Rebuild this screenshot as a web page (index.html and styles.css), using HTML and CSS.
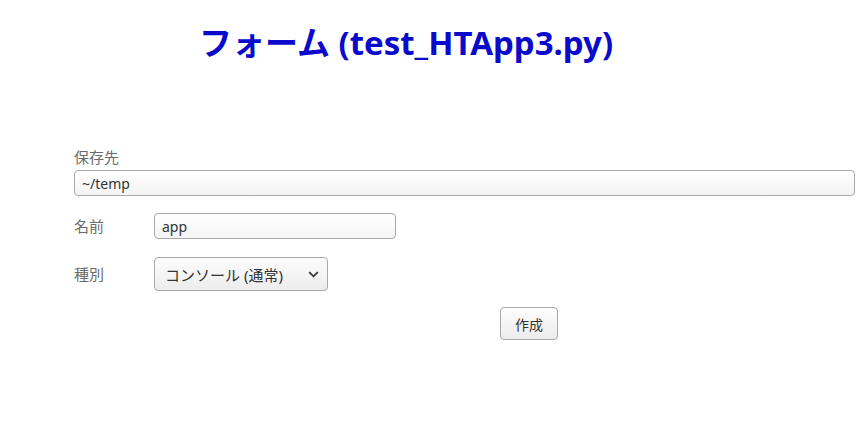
FILE: index.html
```html
<!DOCTYPE html>
<html lang="ja">
<head>
<meta charset="utf-8">
<title>フォーム (test_HTApp3.py)</title>
<link rel="stylesheet" href="styles.css">
</head>
<body>
<header class="head">
  <h1 class="title">フォーム (test_HTApp3.py)</h1>
</header>
<form class="form">
  <div class="field-stack">
    <label class="label">保存先</label>
    <input class="input input-wide" type="text" value="~/temp">
  </div>
  <div class="row row-name">
    <label class="label label-side">名前</label>
    <input class="input input-name" type="text" value="app">
  </div>
  <div class="row row-kind">
    <label class="label label-side">種別</label>
    <div class="select">
      <span class="select-text">コンソール (通常)</span>
      <svg class="chev" width="11" height="7" viewBox="0 0 11 7"><path d="M1.2 1.2 L5.5 5.3 L9.8 1.2" fill="none" stroke="#333" stroke-width="1.8"/></svg>
    </div>
  </div>
  <div class="actions">
    <button class="btn" type="button">作成</button>
  </div>
</form>
</body>
</html>
```
FILE: styles.css
```css
html, body {
  margin: 0;
  padding: 0;
  background: #fff;
}
body {
  font-family: "Noto Sans", "Noto Sans CJK JP", sans-serif;
  font-size: 14px;
  color: #333;
}
.head {
  width: 812px;
  text-align: center;
  padding-top: 18px;
}
.title {
  margin: 0;
  font-family: "Noto Sans", "Noto Sans CJK JP", sans-serif;
  font-size: 33px;
  font-weight: 700;
  color: #0a0acc;
  line-height: 50px;
}
.form {
  padding: 80px 12px 0 74px;
}
.field-stack {
  display: flex;
  flex-direction: column;
  gap: 4px;
}
.label {
  color: #6b6b6b;
  font-size: 15px;
  line-height: 18px;
}
.label-side {
  width: 80px;
  flex: none;
}
.input {
  box-sizing: border-box;
  height: 26px;
  border: 1px solid #a9a9a9;
  border-radius: 4px;
  background: linear-gradient(#fff, #f4f4f4);
  font-family: "Noto Sans", "Noto Sans CJK JP", sans-serif;
  font-size: 14px;
  color: #333;
  padding: 0 7px;
  margin: 0;
}
.input-wide {
  width: 100%;
}
.input-name {
  width: 242px;
}
.row {
  display: flex;
  align-items: center;
}
.row-name {
  margin-top: 17px;
}
.row-kind {
  margin-top: 18px;
}
.select {
  box-sizing: border-box;
  width: 174px;
  height: 34px;
  border: 1px solid #a9a9a9;
  border-radius: 4px;
  background: linear-gradient(#fdfdfd, #ececec);
  display: flex;
  align-items: center;
  justify-content: space-between;
  padding: 0 8px 0 10px;
  color: #333;
  font-size: 15px;
}
.chev {
  display: block;
}
.actions {
  display: flex;
  padding-left: 426px;
  margin-top: 16px;
}
.btn {
  box-sizing: border-box;
  width: 58px;
  height: 33px;
  border: 1px solid #a9a9a9;
  border-radius: 4px;
  background: linear-gradient(#fdfdfd, #ececec);
  font-family: "Noto Sans", "Noto Sans CJK JP", sans-serif;
  font-size: 14px;
  color: #333;
  padding: 0;
}
```
